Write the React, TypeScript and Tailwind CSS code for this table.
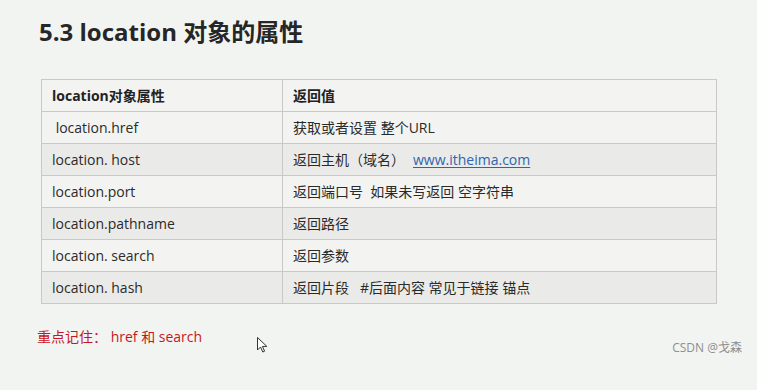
const rows: { name: string; value: React.ReactNode }[] = [
  { name: " location.href", value: "获取或者设置 整个URL" },
  {
    name: "location. host",
    value: (
      <>
        返回主机（域名）
        <span className="ml-[8px] text-[#2f64b0] underline underline-offset-2">www.itheima.com</span>
      </>
    ),
  },
  { name: "location.port", value: "返回端口号\u00a0\u00a0如果未写返回 空字符串" },
  { name: "location.pathname", value: "返回路径" },
  { name: "location. search", value: "返回参数" },
  { name: "location. hash", value: "返回片段\u00a0\u00a0 #后面内容 常见于链接 锚点" },
];

export default function App() {
  return (
    <div
      className="relative h-[390px] w-[757px] overflow-hidden bg-[#f2f4f2] text-[#222]"
      style={{ fontFamily: '"Open Sans", "Noto Sans CJK SC", sans-serif' }}
    >
      <h1 className="pl-[39px] pt-[16px] text-[24px] font-bold leading-[32px] text-[#262626]">
        5.3 location 对象的属性
      </h1>

      <table className="mt-[31px] ml-[41px] w-[676px] border-collapse text-[14px]">
        <colgroup>
          <col className="w-[241px]" />
          <col />
        </colgroup>
        <thead>
          <tr className="h-[32px] bg-[#f3f4f2]">
            <th className="border border-[#c9cac8] pl-[10px] text-left font-bold">location对象属性</th>
            <th className="border border-[#c9cac8] pl-[10px] text-left font-bold">返回值</th>
          </tr>
        </thead>
        <tbody>
          {rows.map((r, i) => (
            <tr key={i} className={`h-[32px] ${i % 2 === 1 ? "bg-[#eaebe9]" : "bg-[#f3f4f2]"}`}>
              <td className="whitespace-pre border border-[#c9cac8] pl-[10px] text-[#2a2a2a]">{r.name}</td>
              <td className="border border-[#c9cac8] pl-[10px] text-[#2a2a2a]">{r.value}</td>
            </tr>
          ))}
        </tbody>
      </table>

      <p className="mt-[22px] ml-[37px] text-[14px] text-[#c8161d]">重点记住： href 和 search</p>

      {/* mouse cursor */}
      <svg className="absolute left-[257px] top-[337px]" width="11" height="16" viewBox="0 0 11 16">
        <path d="M0.5 0.5 L0.5 13 L3.5 10 L5.8 15 L7.6 14.2 L5.4 9.4 L9.8 9.4 Z" fill="#fff" stroke="#333" strokeWidth="1" />
      </svg>

      <div className="absolute right-[15px] top-[339px] text-[12px] text-[#8f8f8f]">CSDN @戈森</div>
    </div>
  );
}
